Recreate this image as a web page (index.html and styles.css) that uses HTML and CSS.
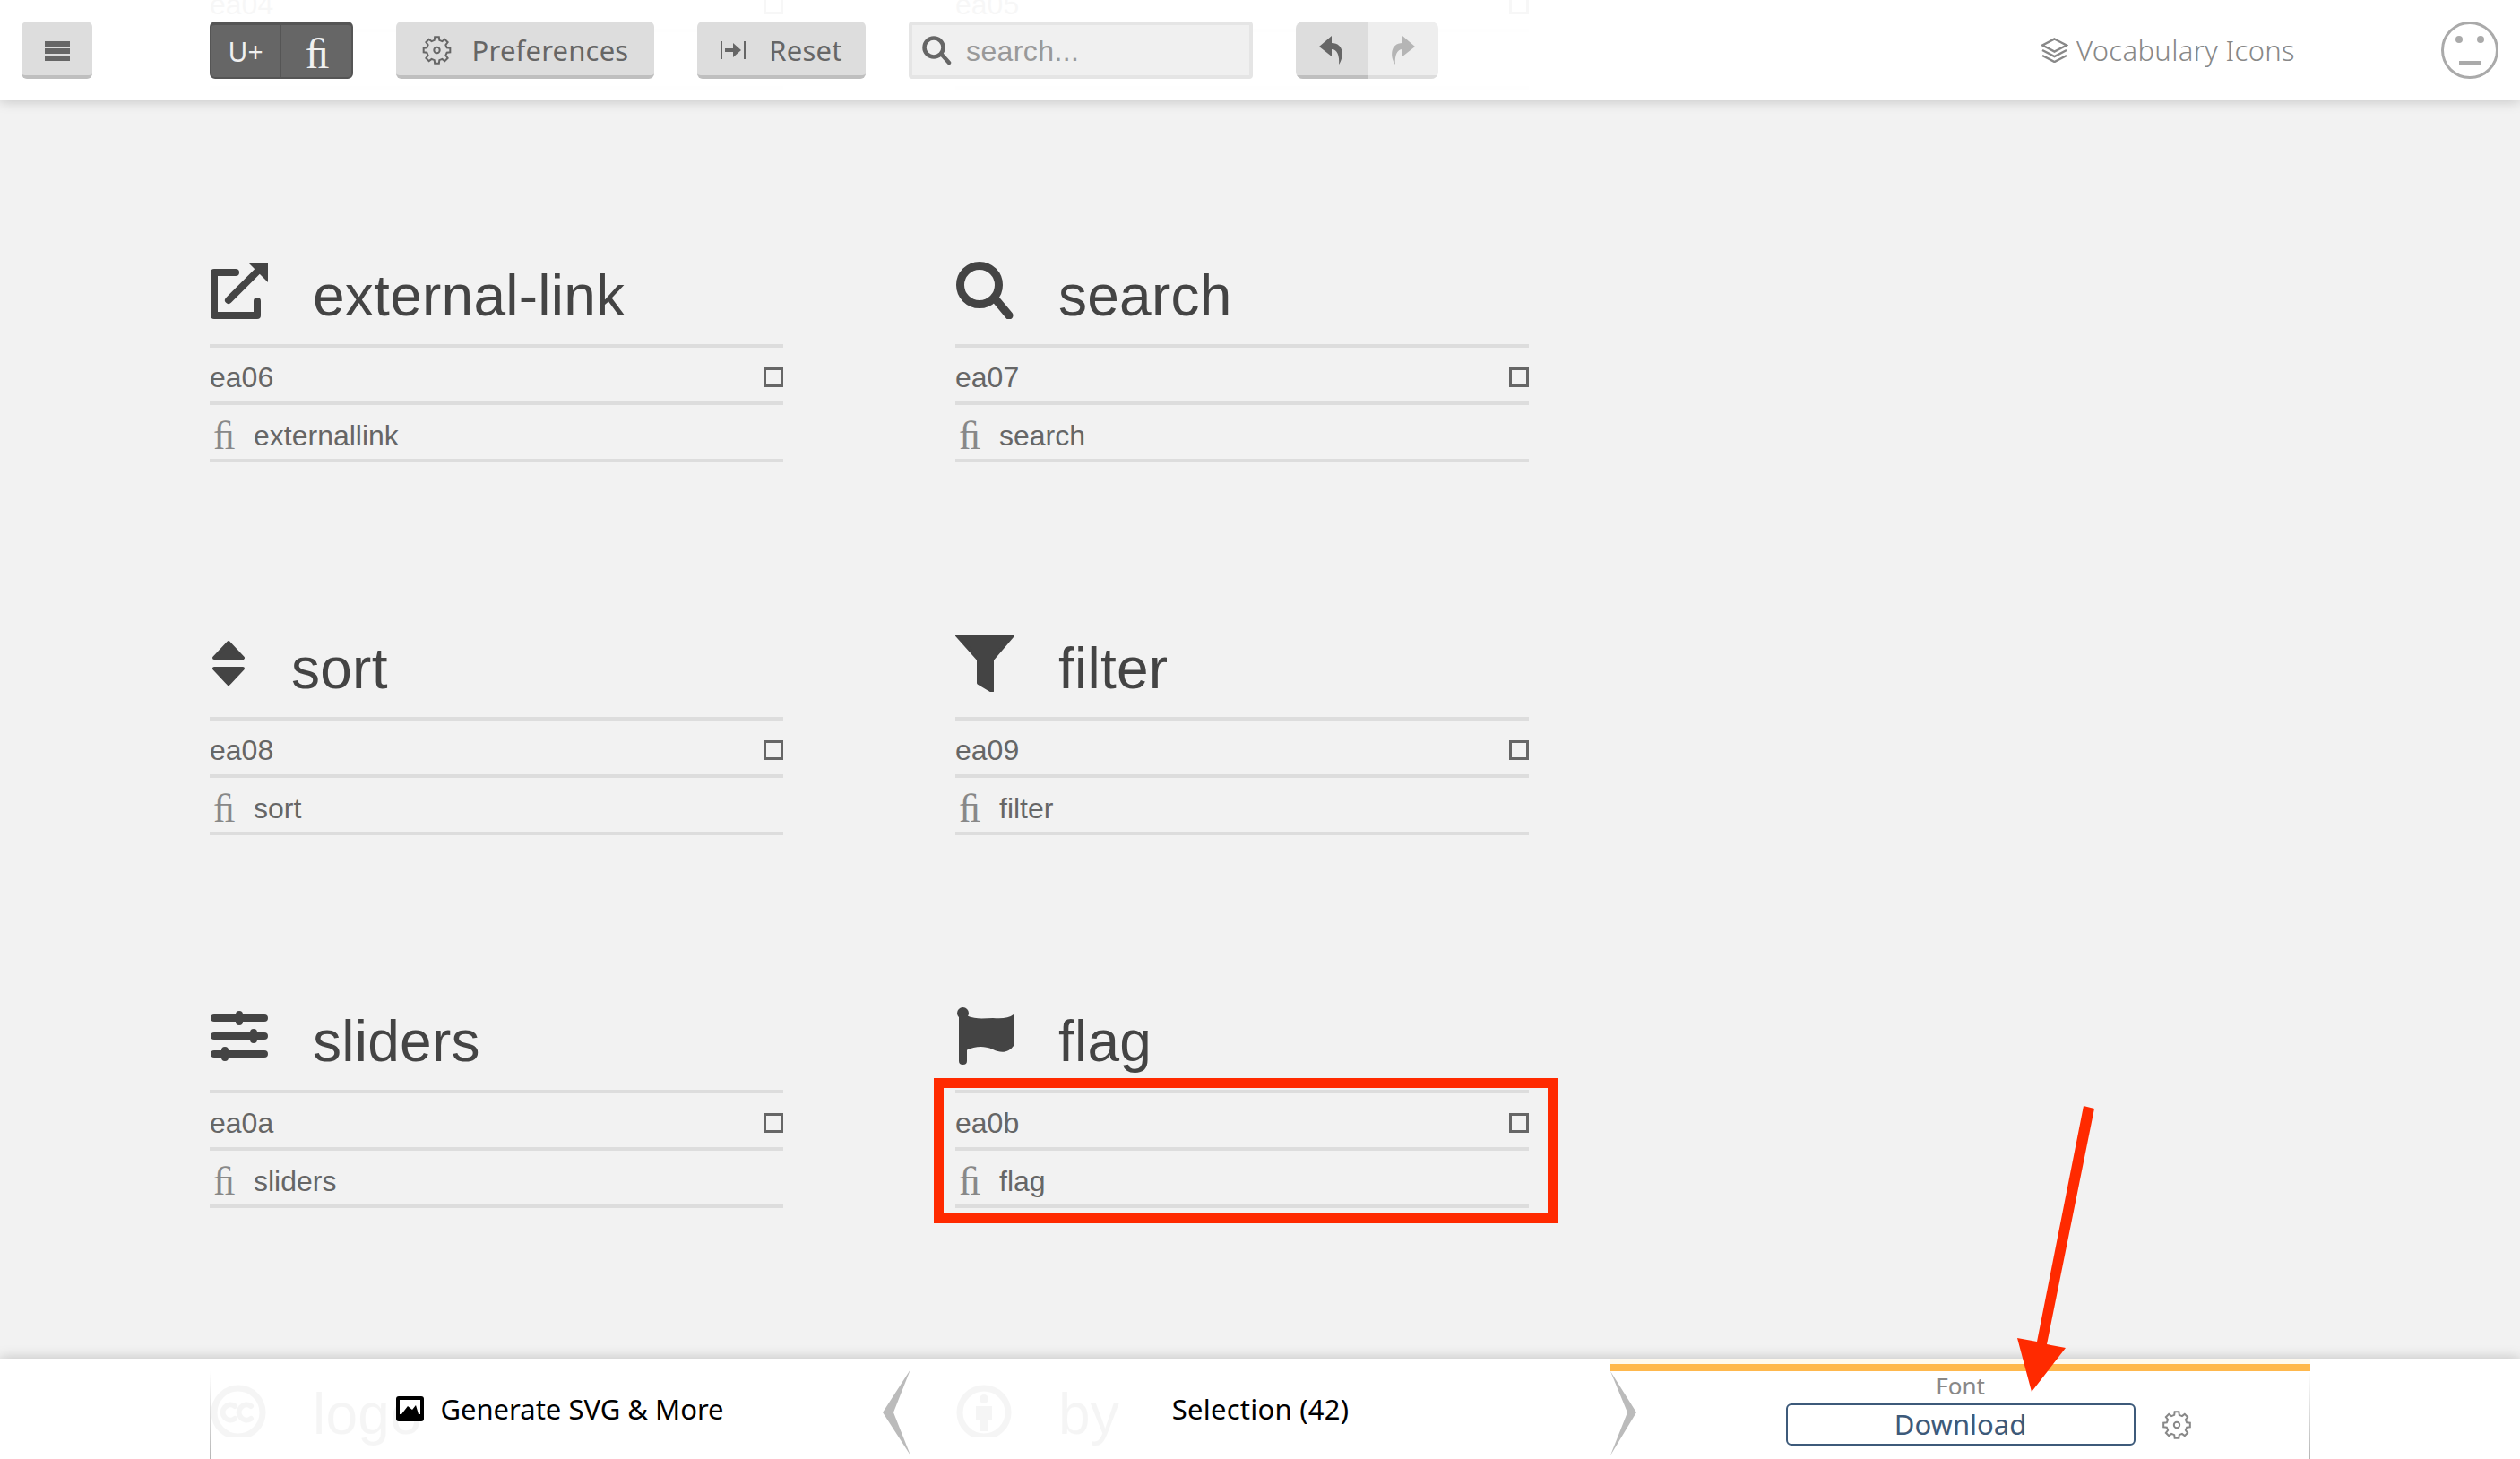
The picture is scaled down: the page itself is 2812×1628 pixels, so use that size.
FILE: index.html
```html
<!DOCTYPE html>
<html lang="en">
<head>
<meta charset="utf-8">
<title>Vocabulary Icons</title>
<link rel="stylesheet" href="styles.css">
</head>
<body>
<div class="page">
  <main class="grid">
    <section class="card">
      <div class="head"></div>
      <div class="row code"><span>ea04</span><i class="check"></i></div>
      <div class="row name"></div>
    </section>
    <section class="card">
      <div class="head"></div>
      <div class="row code"><span>ea05</span><i class="check"></i></div>
      <div class="row name"></div>
    </section>

    <section class="card">
      <div class="head">
        <svg class="glyph" viewBox="-1 0 65 64"><path class="ln8" d="M28 12H4V60H52V44"/><path class="ln8" d="M20 43L52 11"/><path class="fl" d="M42 1H64V23Z"/></svg>
        <h2>external-link</h2>
      </div>
      <div class="row code"><span>ea06</span><i class="check"></i></div>
      <div class="row name"><span class="fi">ﬁ</span><span>externallink</span></div>
    </section>
    <section class="card">
      <div class="head">
        <svg class="glyph" viewBox="-1 0 65 64"><circle class="ln9" cx="26" cy="26" r="21.5"/><path class="ln9" d="M44 42L59 60"/></svg>
        <h2>search</h2>
      </div>
      <div class="row code"><span>ea07</span><i class="check"></i></div>
      <div class="row name"><span class="fi">ﬁ</span><span>search</span></div>
    </section>

    <section class="card">
      <div class="head">
        <svg class="glyph narrow" viewBox="-3 -7 41 64"><path class="fr" d="M18 2L34 19H2Z"/><path class="fr" d="M2 31H34L18 48Z"/></svg>
        <h2>sort</h2>
      </div>
      <div class="row code"><span>ea08</span><i class="check"></i></div>
      <div class="row name"><span class="fi">ﬁ</span><span>sort</span></div>
    </section>
    <section class="card">
      <div class="head">
        <svg class="glyph" viewBox="-1 0 65 64"><path class="fr" d="M1 1H63L40 28V63L25 54V28Z"/></svg>
        <h2>filter</h2>
      </div>
      <div class="row code"><span>ea09</span><i class="check"></i></div>
      <div class="row name"><span class="fi">ﬁ</span><span>filter</span></div>
    </section>

    <section class="card">
      <div class="head">
        <svg class="glyph" viewBox="-1 -4 65 64"><path class="ln8" d="M4 8H60M4 28H60M4 48H60"/><path class="ln8" d="M32 4V12M48 24V32M16 44V52"/></svg>
        <h2>sliders</h2>
      </div>
      <div class="row code"><span>ea0a</span><i class="check"></i></div>
      <div class="row name"><span class="fi">ﬁ</span><span>sliders</span></div>
    </section>
    <section class="card marked">
      <div class="head">
        <svg class="glyph" viewBox="-2 0 65 64"><circle class="fl" cx="6.5" cy="6.5" r="6.500"/><path class="fl" d="M2 6H11V60Q11 64 6.500 64T2 60Z"/><path class="fl" d="M10 9C22 14 30 12 40 12 50 13 58 12 63 8V43C58 50 50 52 40 47 28 42 20 44 10 48Z"/></svg>
        <h2>flag</h2>
      </div>
      <div class="row code"><span>ea0b</span><i class="check"></i></div>
      <div class="row name"><span class="fi">ﬁ</span><span>flag</span></div>
      <div class="redbox"></div>
    </section>

    <section class="card">
      <div class="head">
        <svg class="glyph" viewBox="-1 -5 65 64"><circle class="ln7" cx="31" cy="31" r="27"/><path class="ln6" d="M27 24A8.500 8.500 0 1 0 27 38M45 24A8.500 8.500 0 1 0 45 38"/></svg>
        <h2>logo</h2>
      </div>
    </section>
    <section class="card">
      <div class="head">
        <svg class="glyph" viewBox="-1 -5 65 64"><circle class="ln7" cx="31" cy="31" r="27"/><circle class="fl" cx="31" cy="16" r="5"/><path class="fl" d="M22 24H40V40H36V52H26V40H22Z"/></svg>
        <h2>by</h2>
      </div>
    </section>
  </main>

  <header class="topbar">
    <button class="btn menu" type="button">
      <svg class="ic-menu" viewBox="0 0 28 22"><path d="M0 0H28V6H0ZM0 8H28V14H0ZM0 16H28V22H0Z"/></svg>
    </button>
    <div class="toggle">
      <span class="toggle-u">U+</span>
      <span class="toggle-fi">ﬁ</span>
    </div>
    <button class="btn prefs" type="button">
      <svg class="gear" viewBox="-16 -16 32 32"><polygon points="-2.78,-11.16 -2.35,-14.82 2.35,-14.82 2.78,-11.16 5.93,-9.86 8.82,-12.14 12.14,-8.82 9.86,-5.93 11.16,-2.78 14.82,-2.35 14.82,2.35 11.16,2.78 9.86,5.93 12.14,8.82 8.82,12.14 5.93,9.86 2.78,11.16 2.35,14.82 -2.35,14.82 -2.78,11.16 -5.93,9.86 -8.82,12.14 -12.14,8.82 -9.860,5.93 -11.16,2.78 -14.82,2.35 -14.82,-2.35 -11.16,-2.78 -9.86,-5.93 -12.14,-8.82 -8.82,-12.14 -5.93,-9.86"/><circle r="3.200"/></svg>
      <span>Preferences</span>
    </button>
    <button class="btn reset" type="button">
      <svg class="ic-reset" viewBox="0 0 28 20"><path d="M0 0H2V20H0ZM26 0H28V20H26ZM5 8H14V2L23 10 14 18V12H5Z"/></svg>
      <span>Reset</span>
    </button>
    <div class="searchbox">
      <svg class="ic-search" viewBox="0 0 33 32"><circle cx="13" cy="13" r="10.500"/><path d="M22 21L30 30"/></svg>
      <span class="placeholder">search...</span>
    </div>
    <div class="history">
      <span class="undo"><svg class="ic-undo" viewBox="0 0 28 32"><path d="M14 0L0 12 14 23V15C20 15 23 22 22 32 28 24 28 8 14 8Z"/></svg></span>
      <span class="redo"><svg class="ic-redo" viewBox="0 0 28 32"><path d="M14 0L28 12 14 23V15C8 15 5 22 6 32 0 24 0 8 14 8Z"/></svg></span>
    </div>
    <div class="project">
      <svg class="ic-layers" viewBox="0 0 31 28"><path d="M15.500 1.500L29 8.500 15.500 15.500 2 8.500Z"/><path d="M2 14L15.500 21 29 14M2 20L15.500 27 29 20"/></svg>
      <span>Vocabulary Icons</span>
    </div>
    <svg class="face" viewBox="0 0 64 64"><circle class="face-o" cx="32" cy="32" r="30.500"/><circle class="face-e" cx="20" cy="20" r="4"/><circle class="face-e" cx="44" cy="20" r="4"/><path class="face-e" d="M20 44H44V48H20Z"/></svg>
  </header>

  <footer class="bottombar">
    <div class="tabs">
      <div class="tab tab-gen">
        <svg class="ic-image" viewBox="0 0 31 28"><rect x="0" y="0" width="31" height="28" rx="3"/><path class="hole" d="M4 4H27V20H4Z"/><path class="mount" d="M6 20L13 11 18 15 22 10 25 20Z"/></svg>
        <span>Generate SVG &amp; More</span>
        <svg class="chev chev-l" viewBox="0 0 31 96"><polygon points="31,0 0,48 31,96 12,48"/></svg>
      </div>
      <div class="tab tab-sel"><span>Selection (42)</span></div>
      <div class="tab tab-font">
        <svg class="chev chev-r" viewBox="0 0 29 94"><polygon points="0,0 29,46 0,94 19,46"/></svg>
        <div class="font-label">Font</div>
        <div class="font-row">
          <span></span>
          <button class="download" type="button">Download</button>
          <svg class="gear gear-sm" viewBox="-16 -16 32 32"><polygon points="-2.78,-11.16 -2.35,-14.82 2.35,-14.82 2.78,-11.16 5.93,-9.86 8.82,-12.14 12.14,-8.82 9.86,-5.93 11.16,-2.78 14.82,-2.35 14.82,2.35 11.16,2.78 9.86,5.93 12.14,8.82 8.82,12.14 5.93,9.86 2.78,11.16 2.35,14.82 -2.35,14.82 -2.78,11.16 -5.93,9.86 -8.82,12.14 -12.14,8.82 -9.860,5.93 -11.16,2.78 -14.82,2.35 -14.82,-2.35 -11.16,-2.78 -9.86,-5.93 -12.14,-8.82 -8.82,-12.14 -5.93,-9.86"/><circle r="3.200"/></svg>
        </div>
      </div>
    </div>
  </footer>

  <svg class="arrow" viewBox="0 0 2812 1628"><polygon points="2325,1234 2337,1237 2284,1500 2305,1504 2267,1553 2251,1493 2273,1497"/></svg>
</div>
</body>
</html>
```
FILE: styles.css
```css
* { box-sizing: border-box; }
html, body { margin: 0; height: 100%; }
body { background: #f2f2f2; font-family: "Liberation Sans", Arial, sans-serif; color: #666; }
.page { position: relative; width: 2812px; height: 1628px; overflow: hidden; }

/* icon grid */
.grid {
  display: grid;
  grid-template-columns: 640px 640px;
  grid-auto-rows: 416px;
  column-gap: 192px;
  margin-top: -128px;
  padding-left: 234px;
}
.card { position: relative; }
.head {
  display: flex;
  align-items: flex-start;
  gap: 50px;
  height: 100px;
  padding-top: 4px;
  border-bottom: 4px solid #ddd;
}
.head h2 {
  margin: 6px 0 0;
  font-size: 64px;
  line-height: 64px;
  font-weight: 400;
  letter-spacing: .25px;
  color: #444;
}
.glyph { width: 65px; height: 64px; flex: none; }
.glyph.narrow { width: 41px; }
.fl { fill: #444; }
.fr { fill: #444; stroke: #444; stroke-width: 4; stroke-linejoin: round; }
.ln6, .ln7, .ln8, .ln9 { fill: none; stroke: #444; stroke-linecap: round; stroke-linejoin: round; }
.ln6 { stroke-width: 6; }
.ln7 { stroke-width: 7; }
.ln8 { stroke-width: 8; }
.ln9 { stroke-width: 9; }
.row {
  display: flex;
  align-items: center;
  height: 64px;
  border-bottom: 4px solid #ddd;
  font-size: 32px;
  line-height: 36px;
}
.code { justify-content: space-between; padding-top: 6px; }
.name { padding-top: 8px; }
.check { width: 22px; height: 22px; border: 3px solid #666; }
.fi {
  width: 49px;
  padding-left: 4px;
  font-family: "Liberation Serif", serif;
  font-size: 44px;
  line-height: 36px;
  color: #888;
  position: relative;
  top: 1px;
}
.redbox {
  position: absolute;
  left: -24px;
  top: 83px;
  width: 696px;
  height: 162px;
  border: 11px solid #ff2a00;
}

/* top bar */
.topbar {
  position: absolute;
  left: 0; top: 0; right: 0;
  height: 112px;
  padding: 24px 24px 0;
  display: flex;
  align-items: flex-start;
  background: rgba(255,255,255,.95);
  box-shadow: 0 0 14px rgba(0,0,0,.22);
  font-family: "Noto Sans", sans-serif;
}
.btn {
  display: flex;
  align-items: center;
  justify-content: center;
  height: 64px;
  padding: 4px 0 0;
  border: 0;
  border-bottom: 4px solid #bfbfbf;
  border-radius: 6px;
  background: #ddd;
  color: #666;
  font: 400 31px "Noto Sans", sans-serif;
  letter-spacing: .2px;
}
.menu { width: 79px; }
.ic-menu { width: 28px; height: 22px; fill: #666; margin-top: 2px; }
.toggle {
  display: flex;
  width: 160px;
  height: 64px;
  margin-left: 131px;
  border-radius: 6px;
  overflow: hidden;
  background: #666;
  border: 2px solid #555;
  border-top-width: 4px;
  color: #f0f0f0;
}
.toggle-u {
  width: 78px;
  padding-top: 12px;
  text-align: center;
  font-size: 30px;
  line-height: 36px;
  border-right: 2px solid #555;
}
.toggle-fi {
  flex: 1;
  padding-left: 2px;
  text-align: center;
  font-family: "Liberation Serif", serif;
  font-size: 48px;
  line-height: 64px;
}
.prefs { width: 288px; margin-left: 48px; gap: 23px; }
.gear { width: 33px; height: 32px; fill: none; stroke: #666; stroke-width: 2; }
.reset { width: 188px; margin-left: 48px; gap: 26px; }
.ic-reset { width: 28px; height: 20px; fill: #666; }
.searchbox {
  display: flex;
  align-items: center;
  width: 384px;
  height: 64px;
  margin-left: 48px;
  padding-left: 11px;
  gap: 16px;
  background: #f0f0f0;
  border: 4px solid #e5e5e5;
  border-radius: 4px;
  font-family: "Liberation Sans", sans-serif;
  font-size: 32px;
  letter-spacing: .4px;
  color: #999;
}
.placeholder { position: relative; top: 1px; }
.ic-search { width: 33px; height: 32px; fill: none; stroke: #666; stroke-width: 4.500; stroke-linecap: round; }
.history { display: flex; width: 159px; height: 64px; margin-left: 48px; border-radius: 8px; overflow: hidden; }
.undo, .redo { flex: 1; display: flex; justify-content: center; padding-top: 16px; }
.undo { background: #ddd; border-bottom: 4px solid #bfbfbf; }
.redo { background: #eee; border-bottom: 4px solid #ddd; }
.ic-undo, .ic-redo { width: 28px; height: 32px; }
.ic-undo { fill: #666; }
.ic-redo { fill: #b5b5b5; }
.project {
  display: flex;
  align-items: center;
  gap: 9px;
  margin-left: auto;
  height: 64px;
  color: #888;
  font-size: 31px;
  font-weight: 300;
  letter-spacing: .35px;
}
.ic-layers { width: 31px; height: 28px; fill: none; stroke: #888; stroke-width: 2.500; }
.face { width: 64px; height: 64px; margin-left: 163px; }
.face-o { fill: none; stroke: #aaa; stroke-width: 3; }
.face-e { fill: #aaa; }

/* bottom bar */
.bottombar {
  position: absolute;
  left: 0; right: 0; bottom: 0;
  height: 112px;
  padding-left: 234px;
  background: rgba(255,255,255,.95);
  box-shadow: 0 0 14px rgba(0,0,0,.22);
  font-family: "Noto Sans", sans-serif;
}
.tabs { position: relative; display: grid; grid-template-columns: 782px 781px 781px; width: 2344px; height: 112px; }
.tabs::before {
  content: "";
  position: absolute;
  left: 0; top: 14px; bottom: 0;
  width: 2px;
  background: linear-gradient(#fff, #b5b5b5);
}
.tab { position: relative; display: flex; align-items: center; justify-content: center; color: #000; font-size: 31px; }
.tab-gen { gap: 18px; }
.tab-sel { letter-spacing: .25px; }
.ic-image { width: 31px; height: 28px; }
.ic-image rect { fill: #000; }
.ic-image .hole { fill: #fff; }
.ic-image .mount { fill: #000; }
.chev { position: absolute; fill: #bbb; }
.chev-l { right: 0; top: 12px; width: 31px; height: 96px; }
.chev-r { left: 0; top: 14px; width: 29px; height: 94px; }
.tab-font {
  display: block;
  padding-top: 14px;
  background: linear-gradient(#fffaf0 0 6px, #ffb84d 6px 14px, transparent 14px) no-repeat;
  text-align: center;
}
.tab-font::after {
  content: "";
  position: absolute;
  right: 0; top: 14px; bottom: 0;
  width: 2px;
  background: linear-gradient(#fff, #b5b5b5);
}
.font-label { height: 36px; font-size: 26px; line-height: 32px; color: #888; }
.font-row { display: grid; grid-template-columns: 1fr 390px 1fr; align-items: center; }
.download {
  height: 47px;
  padding: 0;
  background: #fff;
  border: 2px solid #3d5a7a;
  border-radius: 6px;
  color: #3d5a7a;
  font: 400 31px/43px "Noto Sans", sans-serif;
}
.gear-sm { width: 34px; height: 32px; margin-left: 29px; stroke: #888; }
.arrow { position: absolute; left: 0; top: 0; width: 2812px; height: 1628px; fill: #ff2a00; pointer-events: none; }
```
